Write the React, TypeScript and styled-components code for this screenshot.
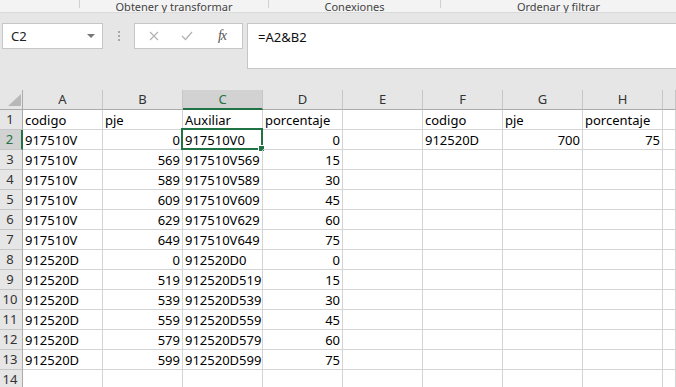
import React from 'react';
import styled, { createGlobalStyle } from 'styled-components';

const GREEN = '#217346';

const GlobalStyle = createGlobalStyle`
  html, body {
    margin: 0;
    padding: 0;
    background: #ffffff;
  }
  body {
    font-family: "Noto Sans", "Open Sans", sans-serif;
  }
`;

const Window = styled.div`
  width: 676px;
  height: 387px;
  overflow: hidden;
  display: flex;
  flex-direction: column;
  background: #ffffff;
`;

const RibbonLabels = styled.div`
  height: 12px;
  flex: 0 0 12px;
  display: flex;
  background: #f3f3f3;
  border-bottom: 1px solid #dadada;
`;

const RibbonGroup = styled.div<{ $width: number }>`
  flex: 0 0 ${(p) => p.$width}px;
  display: flex;
  align-items: flex-start;
`;

const GroupSep = styled.span`
  flex: 0 0 1px;
  height: 8px;
  background: #d0d0d0;
`;

const GroupLabel = styled.span`
  flex: 1;
  text-align: center;
  font-size: 11px;
  line-height: 11px;
  padding-top: 1px;
  color: #444444;
  white-space: nowrap;
`;

const FormulaArea = styled.div`
  flex: 0 0 66px;
  display: flex;
  align-items: flex-start;
  padding: 10px 0 0 2px;
  box-sizing: border-box;
  background: #e6e6e6;
`;

const NameBox = styled.div`
  flex: 0 0 101px;
  height: 26px;
  box-sizing: border-box;
  display: flex;
  align-items: center;
  justify-content: space-between;
  padding: 0 7px 0 8px;
  background: #ffffff;
  border: 1px solid #c6c6c6;
  font-size: 13px;
  color: #222222;
`;

const DropArrow = styled.span`
  width: 0;
  height: 0;
  border-left: 4px solid transparent;
  border-right: 4px solid transparent;
  border-top: 4px solid #777777;
`;

const Dots = styled.div`
  flex: 0 0 31px;
  height: 26px;
  display: flex;
  flex-direction: column;
  align-items: center;
  justify-content: center;
  gap: 2px;

  span {
    width: 2px;
    height: 2px;
    background: #a8a8a8;
  }
`;

const FxBox = styled.div`
  flex: 0 0 109px;
  height: 26px;
  box-sizing: border-box;
  display: flex;
  align-items: center;
  gap: 16px;
  padding-left: 12px;
  background: #ffffff;
  border: 1px solid #c6c6c6;
`;

const FxButton = styled.span<{ $width: number }>`
  flex: 0 0 ${(p) => p.$width}px;
  display: flex;
  align-items: center;
  justify-content: center;
`;

const FxGlyph = styled.span`
  font-family: "Liberation Serif", serif;
  font-style: italic;
  font-size: 14px;
  color: #555555;
  letter-spacing: -1px;
`;

const FormulaInput = styled.div`
  flex: 1;
  margin-left: 4px;
  height: 46px;
  box-sizing: border-box;
  padding: 3px 0 0 10px;
  background: #ffffff;
  border: 1px solid #c6c6c6;
  border-right: none;
  font-size: 13px;
  line-height: 20px;
  color: #111111;
`;

const Sheet = styled.div`
  flex: 1;
  display: grid;
  grid-template-columns: 23px repeat(8, 80px) 1fr;
  grid-auto-rows: 20px;
  background: #ffffff;
  border-top: 11px solid #e6e6e6;
`;

const Corner = styled.div`
  background: #e6e6e6;
  border-right: 1px solid #ababab;
  border-bottom: 1px solid #ababab;
  display: flex;
  align-items: flex-end;
  justify-content: flex-end;
  padding: 0 1px 3px 0;
`;

const ColHeader = styled.div<{ $active?: boolean }>`
  box-sizing: border-box;
  background: ${(p) => (p.$active ? '#d2d2d2' : '#e6e6e6')};
  color: ${(p) => (p.$active ? GREEN : '#333333')};
  border-right: 1px solid #c6c6c6;
  border-bottom: ${(p) => (p.$active ? `2px solid ${GREEN}` : '1px solid #ababab')};
  font-size: 13px;
  line-height: 19px;
  text-align: center;
`;

const RowHeader = styled.div<{ $active?: boolean }>`
  box-sizing: border-box;
  background: ${(p) => (p.$active ? '#d2d2d2' : '#e6e6e6')};
  color: ${(p) => (p.$active ? GREEN : '#333333')};
  border-right: ${(p) => (p.$active ? `2px solid ${GREEN}` : '1px solid #ababab')};
  border-bottom: 1px solid #c6c6c6;
  font-size: 13px;
  line-height: 19px;
  text-align: center;
  padding-right: 2px;
`;

const Cell = styled.div<{ $num?: boolean }>`
  position: relative;
  box-sizing: border-box;
  border-right: 1px solid #d4d4d4;
  border-bottom: 1px solid #d4d4d4;
  font-size: 13px;
  line-height: 20px;
  color: #000000;
  padding: 0 ${(p) => (p.$num ? '2px' : '0')} 0 ${(p) => (p.$num ? '0' : '2px')};
  text-align: ${(p) => (p.$num ? 'right' : 'left')};
  white-space: nowrap;
`;

const ActiveFrame = styled.span`
  position: absolute;
  left: -2px;
  top: -2px;
  right: -1px;
  bottom: -1px;
  border: 2px solid ${GREEN};
  pointer-events: none;
`;

const FillHandle = styled.span`
  position: absolute;
  right: -4px;
  bottom: -4px;
  width: 5px;
  height: 5px;
  background: ${GREEN};
  border: 1px solid #ffffff;
`;

type Value = string | number;

const cols = ['A', 'B', 'C', 'D', 'E', 'F', 'G', 'H', ''];

const rows: Value[][] = [
  ['codigo', 'pje', 'Auxiliar', 'porcentaje', '', 'codigo', 'pje', 'porcentaje'],
  ['917510V', 0, '917510V0', 0, '', '912520D', 700, 75],
  ['917510V', 569, '917510V569', 15],
  ['917510V', 589, '917510V589', 30],
  ['917510V', 609, '917510V609', 45],
  ['917510V', 629, '917510V629', 60],
  ['917510V', 649, '917510V649', 75],
  ['912520D', 0, '912520D0', 0],
  ['912520D', 519, '912520D519', 15],
  ['912520D', 539, '912520D539', 30],
  ['912520D', 559, '912520D559', 45],
  ['912520D', 579, '912520D579', 60],
  ['912520D', 599, '912520D599', 75],
  [],
  [],
];

function CloseIcon () {
  return (
    <svg width='10' height='10' viewBox='0 0 10 10'>
      <path d='M1 1 L9 9 M9 1 L1 9' stroke='#b3b3b3' strokeWidth='1.2' fill='none' />
    </svg>
  );
}

function CheckIcon () {
  return (
    <svg width='12' height='10' viewBox='0 0 12 10'>
      <path d='M1 5 L4.5 8.5 L11 1' stroke='#b3b3b3' strokeWidth='1.3' fill='none' />
    </svg>
  );
}

export default function App (): React.ReactElement {
  return (
    <>
      <GlobalStyle />
      <Window>
        <RibbonLabels>
          <RibbonGroup $width={79} />
          <RibbonGroup $width={189}>
            <GroupSep />
            <GroupLabel>Obtener y transformar</GroupLabel>
          </RibbonGroup>
          <RibbonGroup $width={172}>
            <GroupSep />
            <GroupLabel>Conexiones</GroupLabel>
          </RibbonGroup>
          <RibbonGroup $width={236}>
            <GroupSep />
            <GroupLabel>Ordenar y filtrar</GroupLabel>
          </RibbonGroup>
        </RibbonLabels>

        <FormulaArea>
          <NameBox>
            C2
            <DropArrow />
          </NameBox>
          <Dots>
            <span />
            <span />
            <span />
          </Dots>
          <FxBox>
            <FxButton $width={14}><CloseIcon /></FxButton>
            <FxButton $width={20}><CheckIcon /></FxButton>
            <FxButton $width={18}><FxGlyph>fx</FxGlyph></FxButton>
          </FxBox>
          <FormulaInput>=A2&amp;B2</FormulaInput>
        </FormulaArea>

        <Sheet>
          <Corner>
            <svg width='13' height='12' viewBox='0 0 13 12'>
              <polygon points='13,0 13,12 0,12' fill='#b8b8b8' />
            </svg>
          </Corner>
          {cols.map((c, i) => (
            <ColHeader key={`h${i}`} $active={c === 'C'}>{c}</ColHeader>
          ))}
          {rows.map((row, r) => (
            <React.Fragment key={r}>
              <RowHeader $active={r === 1}>{r + 1}</RowHeader>
              {cols.map((_, c) => {
                const v = row[c] ?? '';
                const active = r === 1 && c === 2;
                return (
                  <Cell key={c} $num={typeof v === 'number'}>
                    {v}
                    {active && (
                      <ActiveFrame>
                        <FillHandle />
                      </ActiveFrame>
                    )}
                  </Cell>
                );
              })}
            </React.Fragment>
          ))}
        </Sheet>
      </Window>
    </>
  );
}
